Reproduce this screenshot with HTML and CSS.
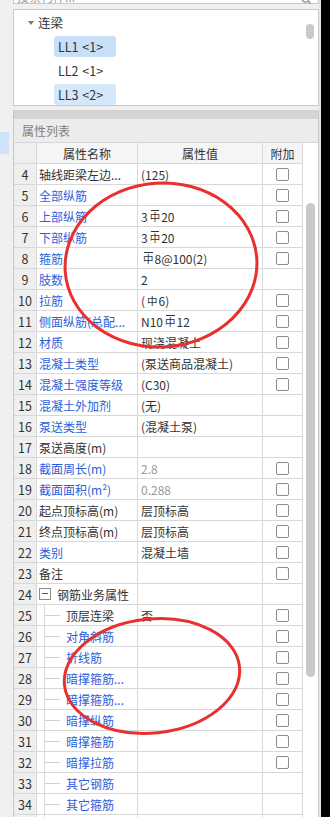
FILE: index.html
```html
<!DOCTYPE html>
<html lang="zh-CN">
<head>
<meta charset="utf-8">
<title>属性列表</title>
<link rel="stylesheet" href="styles.css">
</head>
<body>
<div class="app">
  <div class="side"><div class="side-sel"></div></div>
  <div class="main">
    <div class="search">
      <span class="search-text">搜索构件...</span>
      <svg class="search-icon" width="10" height="12" viewBox="0 0 10 12"><circle cx="4.5" cy="4.5" r="3.6" fill="none" stroke="#8a8a8a" stroke-width="1.2"/><line x1="7.2" y1="7.2" x2="9.5" y2="9.5" stroke="#8a8a8a" stroke-width="1.3"/></svg>
    </div>
    <div class="tree">
      <div class="tree-list">
        <div class="node node-root"><span class="caret"></span><span>连梁</span></div>
        <div class="node node-leaf"><span class="leaf leaf-sel">LL1 &lt;1&gt;</span></div>
        <div class="node node-leaf"><span class="leaf">LL2 &lt;1&gt;</span></div>
        <div class="node node-leaf"><span class="leaf leaf-hover">LL3 &lt;2&gt;</span></div>
      </div>
      <div class="tree-scroll"><div class="tree-thumb"></div></div>
    </div>
    <div class="props">
      <div class="props-bar"></div>
      <div class="props-title">属性列表</div>
      <div class="props-body">
        <div class="grid">
          <div class="c num hd"></div><div class="c hd">属性名称</div><div class="c hd">属性值</div><div class="c hd">附加</div>

          <div class="c num">4</div><div class="c nm">轴线距梁左边...</div><div class="c val">(125)</div><div class="c ck"><i class="box"></i></div>
          <div class="c num">5</div><div class="c nm blue">全部纵筋</div><div class="c val"></div><div class="c ck"><i class="box"></i></div>
          <div class="c num">6</div><div class="c nm blue">上部纵筋</div><div class="c val">3<span class="g3">中</span>20</div><div class="c ck"><i class="box"></i></div>
          <div class="c num">7</div><div class="c nm blue">下部纵筋</div><div class="c val">3<span class="g3">中</span>20</div><div class="c ck"><i class="box"></i></div>
          <div class="c num">8</div><div class="c nm blue">箍筋</div><div class="c val"><span class="g3">中</span>8@100(2)</div><div class="c ck"><i class="box"></i></div>
          <div class="c num">9</div><div class="c nm blue">肢数</div><div class="c val">2</div><div class="c ck"></div>
          <div class="c num">10</div><div class="c nm blue">拉筋</div><div class="c val">(<span class="g1">中</span>6)</div><div class="c ck"><i class="box"></i></div>
          <div class="c num">11</div><div class="c nm blue">侧面纵筋(总配...</div><div class="c val">N10<span class="g3">中</span>12</div><div class="c ck"><i class="box"></i></div>
          <div class="c num">12</div><div class="c nm blue">材质</div><div class="c val">现浇混凝土</div><div class="c ck"><i class="box"></i></div>
          <div class="c num">13</div><div class="c nm blue">混凝土类型</div><div class="c val">(泵送商品混凝土)</div><div class="c ck"><i class="box"></i></div>
          <div class="c num">14</div><div class="c nm blue">混凝土强度等级</div><div class="c val">(C30)</div><div class="c ck"><i class="box"></i></div>
          <div class="c num">15</div><div class="c nm blue">混凝土外加剂</div><div class="c val">(无)</div><div class="c ck"></div>
          <div class="c num">16</div><div class="c nm blue">泵送类型</div><div class="c val">(混凝土泵)</div><div class="c ck"></div>
          <div class="c num">17</div><div class="c nm">泵送高度(m)</div><div class="c val"></div><div class="c ck"></div>
          <div class="c num">18</div><div class="c nm blue">截面周长(m)</div><div class="c val gray">2.8</div><div class="c ck"><i class="box"></i></div>
          <div class="c num">19</div><div class="c nm blue">截面面积(m²)</div><div class="c val gray">0.288</div><div class="c ck"><i class="box"></i></div>
          <div class="c num">20</div><div class="c nm">起点顶标高(m)</div><div class="c val">层顶标高</div><div class="c ck"><i class="box"></i></div>
          <div class="c num">21</div><div class="c nm">终点顶标高(m)</div><div class="c val">层顶标高</div><div class="c ck"><i class="box"></i></div>
          <div class="c num">22</div><div class="c nm blue">类别</div><div class="c val">混凝土墙</div><div class="c ck"><i class="box"></i></div>
          <div class="c num">23</div><div class="c nm">备注</div><div class="c val"></div><div class="c ck"><i class="box"></i></div>
          <div class="c num">24</div><div class="c nm grp"><span class="minus"></span>钢筋业务属性</div><div class="c val"></div><div class="c ck"></div>
          <div class="c num">25</div><div class="c nm sub">顶层连梁</div><div class="c val">否</div><div class="c ck"><i class="box"></i></div>
          <div class="c num">26</div><div class="c nm sub blue">对角斜筋</div><div class="c val"></div><div class="c ck"><i class="box"></i></div>
          <div class="c num">27</div><div class="c nm sub blue">折线筋</div><div class="c val"></div><div class="c ck"><i class="box"></i></div>
          <div class="c num">28</div><div class="c nm sub blue">暗撑箍筋...</div><div class="c val"></div><div class="c ck"><i class="box"></i></div>
          <div class="c num">29</div><div class="c nm sub blue">暗撑箍筋...</div><div class="c val"></div><div class="c ck"><i class="box"></i></div>
          <div class="c num">30</div><div class="c nm sub blue">暗撑纵筋</div><div class="c val"></div><div class="c ck"><i class="box"></i></div>
          <div class="c num">31</div><div class="c nm sub blue">暗撑箍筋</div><div class="c val"></div><div class="c ck"><i class="box"></i></div>
          <div class="c num">32</div><div class="c nm sub blue">暗撑拉筋</div><div class="c val"></div><div class="c ck"><i class="box"></i></div>
          <div class="c num">33</div><div class="c nm sub blue">其它钢筋</div><div class="c val"></div><div class="c ck"></div>
          <div class="c num">34</div><div class="c nm sub blue">其它箍筋</div><div class="c val"></div><div class="c ck"></div>
          <div class="c num"></div><div class="c nm sub"></div><div class="c val"></div><div class="c ck"></div>
        </div>
        <div class="vscroll"><div class="vthumb"></div></div>
      </div>
    </div>
  </div>
  <div class="gap"></div>
  <div class="edge"></div>
</div>
<svg class="annot" width="330" height="817" viewBox="0 0 330 817">
  <ellipse cx="161" cy="265" rx="96" ry="82" fill="none" stroke="#e8302f" stroke-width="3" transform="rotate(-4 161 265)"/>
  <ellipse cx="152" cy="676" rx="88" ry="57" fill="none" stroke="#e8302f" stroke-width="3" transform="rotate(-6 152 676)"/>
</svg>
</body>
</html>
```
FILE: styles.css
```css
* { box-sizing: border-box; }
html, body { margin: 0; height: 100%; overflow: hidden; }
body {
  position: relative;
  background: #f0f0f0;
  font-family: "Noto Sans CJK SC", "Noto Sans", sans-serif;
  font-size: 12px;
  color: #333;
}
.app { display: flex; height: 817px; }
.side { width: 13px; padding-top: 132px; background: #f0f0f0; }
.side-sel { width: 9px; height: 22px; background: #cfe3f8; }
.main { width: 306px; display: flex; flex-direction: column; min-height: 0; }
.gap { width: 2px; background: #e6e6e6; }
.edge { flex: 1; background: #000; }

.search {
  height: 22px;
  margin-top: -18px;
  border: 1px solid #c8c8c8;
  background: #fff;
  display: flex;
  align-items: flex-end;
  justify-content: space-between;
  padding: 0 7px 0 3px;
  color: #9a9a9a;
  flex: none;
}
.search-text { line-height: 12px; }
.search-icon { display: block; margin-bottom: -3px; }

.tree {
  margin-top: 5px;
  height: 97px;
  flex: none;
  border: 1px solid #c8c8c8;
  background: #fff;
  display: flex;
  overflow: hidden;
}
.tree-list { flex: 1; padding-top: 2px; }
.node { height: 21px; margin-bottom: 3px; display: flex; align-items: center; font-size: 12.5px; color: #333; }
.node-root { padding-left: 14px; }
.caret {
  width: 0; height: 0;
  border-left: 3.5px solid transparent;
  border-right: 3.5px solid transparent;
  border-top: 4px solid #777;
  margin-right: 4px;
}
.node-leaf { padding-left: 40px; }
.leaf { height: 21px; width: 62px; padding-left: 4px; display: flex; align-items: center; border-radius: 3px; word-spacing: 1px; }
.leaf-sel { background: #c8dff8; }
.leaf-hover { background: #d5e8fb; }
.tree-scroll { width: 15px; padding: 14px 0 0 3px; }
.tree-thumb { width: 8px; height: 15px; border-radius: 4px; background: #c9c9c9; }

.props {
  margin-top: 4px;
  flex: 1;
  min-height: 0;
  border-left: 1px solid #c8c8c8;
  border-right: 1px solid #c8c8c8;
  background: #fff;
  display: flex;
  flex-direction: column;
  overflow: hidden;
}
.props-bar { height: 9px; background: #d4d4d4; flex: none; }
.props-title {
  height: 24px;
  flex: none;
  background: #ececec;
  border-bottom: 1px solid #d6d6d6;
  color: #7f7f7f;
  font-size: 12px;
  padding-left: 8px;
  display: flex;
  align-items: center;
}
.props-body { display: flex; flex: 1; min-height: 0; }
.grid {
  display: grid;
  grid-template-columns: 23px 101px 125px 40px;
  grid-auto-rows: 21px;
  align-content: start;
}
.c {
  border-right: 1px solid #d8d8d8;
  border-bottom: 1px solid #d8d8d8;
  display: flex;
  align-items: center;
  white-space: nowrap;
  overflow: hidden;
  position: relative;
}
.hd { background: #f5f5f5; justify-content: center; color: #333; }
.num { background: #efefef; justify-content: center; color: #333; font-size: 12.5px; }
.nm { padding-left: 2px; color: #333; }
.val { padding-left: 3px; color: #333; }
.ck { justify-content: center; }
.blue { color: #2a5fdc; }
.gray { color: #999; }
.box {
  display: block;
  width: 13px; height: 13px;
  border: 1px solid #8c8c8c;
  border-radius: 2px;
  background: #fff;
}
.g3, .g1 {
  display: inline-block;
  position: relative;
  font-size: 10.5px;
  line-height: 11px;
  margin: 0 1px 0 2px;
  vertical-align: 1px;
}
.g3::before {
  content: "";
  position: absolute;
  left: 1px; right: 1px;
  top: -1px;
  border-top: 1px solid currentColor;
}
.grp { padding-left: 2px; }
.minus {
  width: 12px; height: 12px;
  border: 1px solid #8c8c8c;
  margin-right: 6px;
  position: relative;
  flex: none;
}
.minus::before {
  content: "";
  position: absolute;
  left: 2px; right: 2px; top: 4px;
  border-top: 1px solid #555;
}
.sub { padding-left: 29px; }
.sub::before {
  content: "";
  position: absolute;
  left: 7px; top: -1px; bottom: -1px;
  border-left: 1px solid #dcdcdc;
}
.sub::after {
  content: "";
  position: absolute;
  left: 8px; width: 15px; top: 10px;
  border-top: 1px solid #d0d0d0;
}
.vscroll { width: 15px; padding: 60px 0 0 3px; }
.vthumb { width: 9px; height: 474px; border-radius: 5px; background: #c9c9c9; }

.annot { position: absolute; left: 0; top: 0; pointer-events: none; }
```
